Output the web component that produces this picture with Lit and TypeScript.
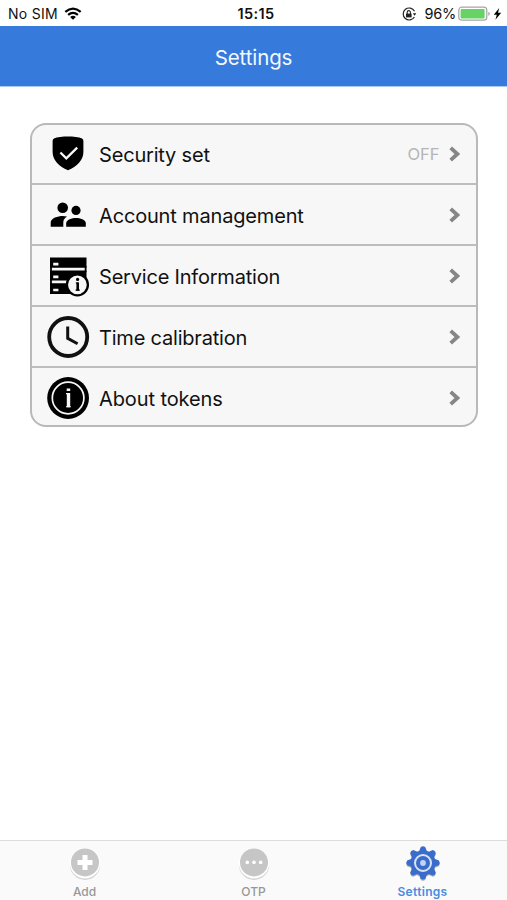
import { LitElement, html, css, svg } from "lit";
import { customElement } from "lit/decorators.js";

const teeth = [0, 45, 90, 135, 180, 225, 270, 315];

const icons = {
  shield: svg`
    <path d="M22 4.6C27 4.6 33 5.2 36 6.5Q37.4 7.1 37.4 9V20C37.4 28 31 34.5 22 38.2C13 34.5 6.6 28 6.6 20V9Q6.6 7.1 8 6.5C11 5.2 17 4.6 22 4.6Z"/>
    <path d="M14.4 20.5L20.3 26.4L31.2 15.6" fill="none" stroke="#f7f7f7" stroke-width="2.3"/>`,
  people: svg`
    <circle cx="16.7" cy="14.8" r="5.3"/><circle cx="30" cy="17.4" r="4.6"/>
    <path d="M4.7 33.8V29.5C4.7 25 12 22.9 16.7 22.9Q18.8 22.9 21 23.5C18 25.3 17.3 27.3 17.3 30V33.8Z"/>
    <path d="M20.2 33.8V30.3C20.2 26.6 26 25 30 25S39.8 26.6 39.8 30.3V33.8Z"/>`,
  server: svg`
    <path d="M4 3.4H40.5V13.8H4ZM4 16.4H40.5V26.6H4ZM4 29.2H28V40H4Z"/>
    <path d="M5 12V30M39.6 12V18" stroke="#000" stroke-width="1.8"/>
    <path d="M7.2 10.1H12.4M7.2 22.9H12.4M7.2 36H12.4" stroke="#f7f7f7" stroke-width="2.6"/>
    <circle cx="31.4" cy="30.8" r="10.5" fill="#f7f7f7" stroke="#000" stroke-width="2.3"/>
    <path d="M29.8 29H32M29.6 36.1H33.8" fill="none" stroke="#000" stroke-width="1.2"/>
    <path d="M31.7 28.4V36.7" stroke="#000" stroke-width="2.6"/><circle cx="31.6" cy="25.4" r="1.6"/>`,
  clock: svg`
    <circle cx="22.2" cy="22" r="19" fill="none" stroke="#111" stroke-width="3.8"/>
    <path d="M21.7 11.5V23.4L31.6 28.8" fill="none" stroke="#111" stroke-width="3"/>`,
  about: svg`
    <circle cx="22.1" cy="22" r="20.9"/>
    <circle cx="22.1" cy="22" r="15.8" fill="none" stroke="#f7f7f7" stroke-width="1.7"/>
    <path d="M20 17.6H22M20 30.7H24.8" fill="none" stroke="#f7f7f7" stroke-width="1.1"/>
    <path d="M22.5 17V31.2" stroke="#f7f7f7" stroke-width="3.4"/>
    <path d="M20.7 13.7H24.2" stroke="#f7f7f7" stroke-width="2.4"/>`,
};

const rows = [
  { icon: icons.shield, label: "Security set", value: "OFF", cls: "l1" },
  { icon: icons.people, label: "Account management", value: "", cls: "l2" },
  { icon: icons.server, label: "Service Information", value: "", cls: "l3" },
  { icon: icons.clock, label: "Time calibration", value: "", cls: "l4" },
  { icon: icons.about, label: "About tokens", value: "", cls: "l5" },
];

const tabs = [
  {
    label: "Add",
    active: false,
    icon: svg`
      <circle cx="20" cy="21" r="15" fill="#d2d2d2"/>
      <circle cx="20" cy="19.2" r="15.2" fill="#fff"/>
      <circle cx="20" cy="18.4" r="14" fill="#c6c6c6"/>
      <path d="M20 10.9V25.9M12.5 18.4H27.5" stroke="#fff" stroke-width="5"/>`,
  },
  {
    label: "OTP",
    active: false,
    icon: svg`
      <circle cx="20" cy="21" r="15" fill="#d2d2d2"/>
      <circle cx="20" cy="19.2" r="15.2" fill="#fff"/>
      <circle cx="20" cy="18.4" r="14" fill="#c6c6c6"/>
      <circle cx="13.3" cy="18.4" r="1.8" fill="#fff"/><circle cx="20" cy="18.4" r="1.8" fill="#fff"/><circle cx="26.7" cy="18.4" r="1.8" fill="#fff"/>`,
  },
  {
    label: "Settings",
    active: true,
    icon: svg`
      <g fill="#a9a9a9" transform="translate(0 1)">
        <circle cx="20" cy="19" r="12.6"/>
        ${teeth.map((a) => svg`<path d="M16 8L17.8 3Q20 1.6 22.2 3L24 8Z" transform="rotate(${a} 20 19)"/>`)}
      </g>
      <g fill="#3a6ccb">
        <circle cx="20" cy="18.8" r="12.6"/>
        ${teeth.map((a) => svg`<path d="M15.8 8L17.8 2.9Q20 1.4 22.2 2.9L24.2 8Z" transform="rotate(${a} 20 18.8)"/>`)}
      </g>
      <circle cx="20" cy="19" r="8" fill="none" stroke="#d9e4f5" stroke-width="2"/>
      <circle cx="20" cy="19" r="2.9" fill="#c3d4f0"/>`,
  },
];

@customElement("app-root")
export class AppRoot extends LitElement {
  static styles = css`
    :host {
      display: flex;
      flex-direction: column;
      height: 900px;
      background: #fff;
      color: #111;
      font-family: Inter, "Liberation Sans", sans-serif;
    }
    svg { display: block; flex: none; }
    .status {
      display: grid;
      grid-template-columns: 1fr auto 1fr;
      align-items: center;
      height: 26px;
      box-sizing: border-box;
      padding: 2px 5px 0 8px;
      font-size: 14px;
      line-height: 24px;
    }
    .side { display: flex; align-items: center; }
    .right { justify-content: flex-end; }
    .carrier { letter-spacing: 0.3px; margin-right: 6px; }
    .time { font-weight: 600; font-size: 14.5px; letter-spacing: 0.35px; padding-left: 2px; }
    .pct { font-size: 14.5px; letter-spacing: -0.2px; margin: 0 2px 0 8px; }
    .bolt { margin-left: 2px; }
    .bar {
      height: 61px;
      display: flex;
      align-items: center;
      justify-content: center;
      background: #367bdb;
      border-bottom: 1px solid #a9c9f1;
      box-sizing: border-box;
      color: #f4f8ff;
      font-size: 20.5px;
      letter-spacing: -0.1px;
      padding-top: 2px;
    }
    .body { flex: 1; padding: 36px 29.5px 0 30px; }
    .card {
      border: 2px solid #b9b9b9;
      border-radius: 16px;
      background: #f7f7f7;
      overflow: hidden;
    }
    .row {
      display: flex;
      align-items: center;
      height: 61px;
      box-sizing: border-box;
      padding: 1px 15px 0 14px;
      border-bottom: 2px solid #bdbdbd;
    }
    .row:first-child { height: 60px; padding-top: 0; }
    .row:last-child { border-bottom: none; height: 57px; padding-top: 3px; }
    .label {
      flex: 1;
      margin-left: 9px;
      font-size: 20px;
      white-space: nowrap;
      padding-top: 1px;
    }
    .l1 { letter-spacing: -0.18px; }
    .l2 { letter-spacing: -0.17px; }
    .l3 { letter-spacing: -0.2px; }
    .l4 { letter-spacing: -0.2px; }
    .l5 { letter-spacing: -0.1px; }
    .value { font-size: 16.5px; color: #b5b5b5; margin-right: 9px; }
    .tabs {
      height: 60px;
      display: grid;
      grid-template-columns: repeat(3, 1fr);
      border-top: 1px solid #dcdcdc;
      background: #fafafa;
      box-sizing: border-box;
    }
    .tab {
      display: flex;
      flex-direction: column;
      align-items: center;
      padding-top: 3px;
      color: #979797;
      font-size: 12px;
      font-weight: 500;
      line-height: 16px;
    }
    .active { color: #4a8be2; font-weight: 600; letter-spacing: 0.3px; }
  `;

  render() {
    return html`
      <div class="status">
        <div class="side">
          <span class="carrier">No SIM</span>
          <svg width="18" height="14" viewBox="0 0 18 14" fill="none" stroke="#000" stroke-width="2.2">
            <path d="M1.3 4.9Q9 -1.7 16.7 4.9M4.1 7.9Q9 3.8 13.9 7.9"/>
            <path d="M9 12.8L6.1 9.9Q9 7.8 11.9 9.9Z" fill="#000" stroke="none"/>
          </svg>
        </div>
        <span class="time">15:15</span>
        <div class="side right">
          <svg width="14" height="14" viewBox="0 0 14 14" fill="none" stroke="#222">
            <path d="M12.5 4.2A6 6 0 1 0 12.4 10" stroke-width="1.2"/>
            <path d="M10.8 6.2H14.4L12.6 8.8Z" fill="#222" stroke="none"/>
            <path d="M4 6.6H9.6V10.4H4Z" fill="#222" stroke="none"/>
            <path d="M5.2 7V5.2a1.6 1.6 0 0 1 3.2 0V7" stroke-width="1.1"/>
          </svg>
          <span class="pct">96%</span>
          <svg width="33" height="16" viewBox="0 0 33 16">
            <rect x="0.8" y="1.2" width="28" height="13" rx="3" fill="#fff" stroke="#a5a5a5" stroke-width="1.2"/>
            <rect x="2.6" y="3" width="24" height="9.4" rx="1" fill="#67d366"/>
            <path d="M30.3 5.7Q31.8 6.2 31.8 7.8T30.3 9.9Z" fill="#a5a5a5"/>
          </svg>
          <svg class="bolt" width="9" height="14" viewBox="0 0 9 14"><path d="M6.2 1L0.8 7.8H3.8L2.4 12.8L8.2 5.8H5Z"/></svg>
        </div>
      </div>
      <div class="bar"><span class="title">Settings</span></div>
      <div class="body">
        <div class="card">
          ${rows.map(
            (r) => html`<div class="row">
              <svg width="44" height="44" viewBox="0 0 44 44">${r.icon}</svg>
              <span class="label ${r.cls}">${r.label}</span>
              ${r.value ? html`<span class="value">${r.value}</span>` : ""}
              <svg width="12" height="16" viewBox="0 0 12 16" fill="none" stroke="#868686" stroke-width="3.8">
                <path d="M1.7 1.8L8.4 8L1.7 14.2"/>
              </svg>
            </div>`
          )}
        </div>
      </div>
      <div class="tabs">
        ${tabs.map(
          (t) => html`<div class="tab ${t.active ? "active" : ""}">
            <svg width="40" height="40" viewBox="0 0 40 40">${t.icon}</svg>
            <span>${t.label}</span>
          </div>`
        )}
      </div>
    `;
  }
}
